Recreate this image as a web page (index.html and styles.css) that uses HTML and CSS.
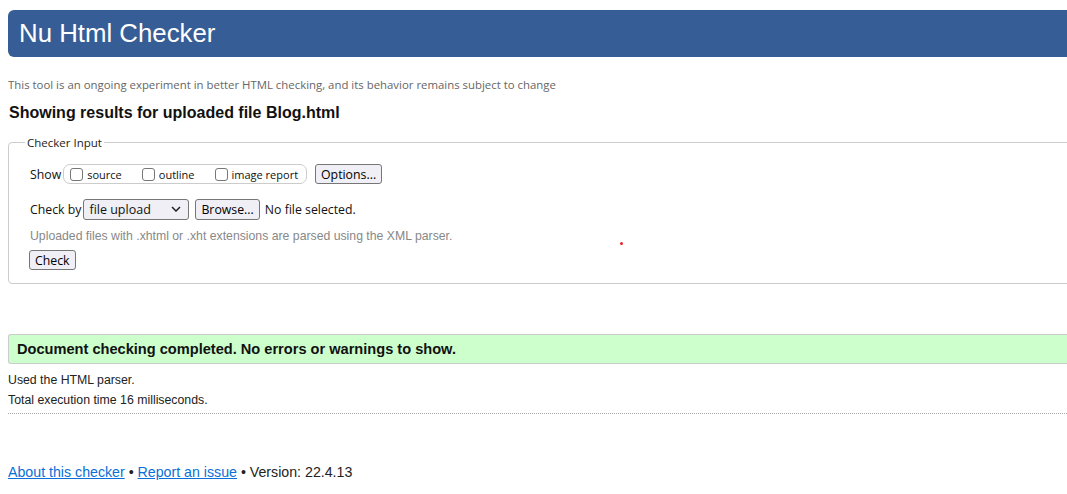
FILE: index.html
```html
<!DOCTYPE html>
<html lang="en">
<head>
<meta charset="utf-8">
<title>Nu Html Checker</title>
<link rel="stylesheet" href="styles.css">
</head>
<body>
<h1 class="header">Nu Html Checker</h1>
<p class="intro">This tool is an ongoing experiment in better HTML checking, and its behavior remains subject to change</p>
<h2 class="title">Showing results for uploaded file Blog.html</h2>
<form class="form">
  <fieldset class="input-box">
    <legend class="legend">Checker Input</legend>
    <div class="row show-row">
      <span class="label">Show</span>
      <span class="group">
        <label class="opt"><span class="cb"></span>source</label>
        <label class="opt"><span class="cb"></span>outline</label>
        <label class="opt"><span class="cb"></span>image report</label>
      </span>
      <span class="btn btn-options">Options...</span>
    </div>
    <div class="row check-row">
      <span class="label">Check by</span>
      <span class="select">file upload<svg class="chev" width="10" height="6" viewBox="0 0 10 6"><path d="M1 1 L5 5 L9 1" fill="none" stroke="#222" stroke-width="1.5"/></svg></span>
      <span class="btn btn-browse">Browse...</span>
      <span class="nofile">No file selected.</span>
    </div>
    <p class="hint">Uploaded files with .xhtml or .xht extensions are parsed using the XML parser.</p>
    <span class="btn btn-check">Check</span>
  </fieldset>
</form>
<span class="dot"></span>
<div class="success">Document checking completed. No errors or warnings to show.</div>
<p class="details">Used the HTML parser.</p>
<p class="details">Total execution time 16 milliseconds.</p>
<hr class="sep">
<p class="footer"><a href="#">About this checker</a> • <a href="#">Report an issue</a> • Version: 22.4.13</p>
</body>
</html>
```
FILE: styles.css
```css
html {
  overflow: hidden;
}
body {
  margin: 10px -30px 0 8px;
  font-family: "Liberation Sans", Arial, sans-serif;
  color: #111;
  background: #fff;
  position: relative;
}
.header {
  margin: 0;
  height: 47px;
  line-height: 47px;
  padding: 0 11px;
  background: #365d95;
  color: #fff;
  font-weight: normal;
  font-size: 25.8px;
  border-radius: 6px 0 0 6px;
}
.intro {
  margin: 20px 0 0;
  font-family: "Open Sans", sans-serif;
  font-size: 11.4px;
  line-height: 16px;
  color: #666;
}
.title {
  margin: 10px 0 0 1px;
  font-size: 16px;
  font-weight: bold;
  line-height: 20px;
  color: #111;
}
.form {
  margin: 12px 0 0;
}
.input-box {
  margin: 0;
  border: 1px solid #ccc;
  border-radius: 4px;
  padding: 12px 0 13px 21px;
  font-family: "Open Sans", sans-serif;
  font-size: 12.3px;
  color: #111;
}
.legend {
  margin-left: -5px;
  padding: 0 2px;
  font-size: 11.5px;
  color: #222;
}
.row {
  display: flex;
  align-items: center;
}
.show-row {
  height: 24px;
}
.label {
  margin-right: 2px;
}
.group {
  display: flex;
  align-items: center;
  height: 18px;
  border: 1px solid #ccc;
  border-radius: 7px;
  padding: 0 8px 0 6px;
  font-size: 11px;
}
.opt {
  display: flex;
  align-items: center;
  margin-right: 20px;
}
.opt:last-child {
  margin-right: 0;
}
.cb {
  box-sizing: border-box;
  width: 13px;
  height: 13px;
  border: 1px solid #777;
  border-radius: 3px;
  margin-right: 4px;
  background: #fff;
}
.btn {
  display: inline-flex;
  align-items: center;
  height: 18px;
  padding: 0 5px;
  border: 1px solid #767676;
  border-radius: 3px;
  background: #efeff5;
  color: #000;
}
.btn-options {
  margin-left: 8px;
}
.check-row {
  margin-top: 12px;
  height: 22px;
}
.select {
  display: inline-flex;
  align-items: center;
  justify-content: space-between;
  box-sizing: border-box;
  width: 106px;
  height: 21px;
  padding: 0 7px 0 5px;
  border: 1px solid #767676;
  border-radius: 3px;
  background: #efeff5;
  font-size: 12.5px;
}
.btn-browse {
  margin-left: 6px;
  height: 19px;
}
.nofile {
  margin-left: 5px;
}
.hint {
  margin: 8px 0 0;
  font-family: "Liberation Sans", Arial, sans-serif;
  font-size: 12.25px;
  line-height: 16px;
  color: #888;
}
.btn-check {
  margin-top: 6px;
  margin-left: -1px;
  height: 18px;
  padding: 0 5px;
}
.dot {
  position: absolute;
  left: 612px;
  top: 232px;
  width: 3px;
  height: 3px;
  border-radius: 50%;
  background: #e8232a;
}
.success {
  margin-top: 50px;
  height: 28px;
  line-height: 28px;
  padding: 0 8px;
  border: 1px solid #ccc;
  border-right: none;
  border-radius: 3px 0 0 3px;
  background: #ccffcc;
  font-size: 14.6px;
  font-weight: bold;
  color: #111;
}
.details {
  margin: 0;
  font-size: 12.3px;
  line-height: 20px;
  color: #222;
}
.success + .details {
  margin-top: 6px;
}
.sep {
  margin: 3px 0 0;
  border: none;
  border-top: 1px dotted #aaa;
  height: 0;
}
.footer {
  margin: 48px 0 0;
  font-size: 14.2px;
  line-height: 20px;
  color: #222;
}
.footer a {
  color: #0a6fd6;
}
```
